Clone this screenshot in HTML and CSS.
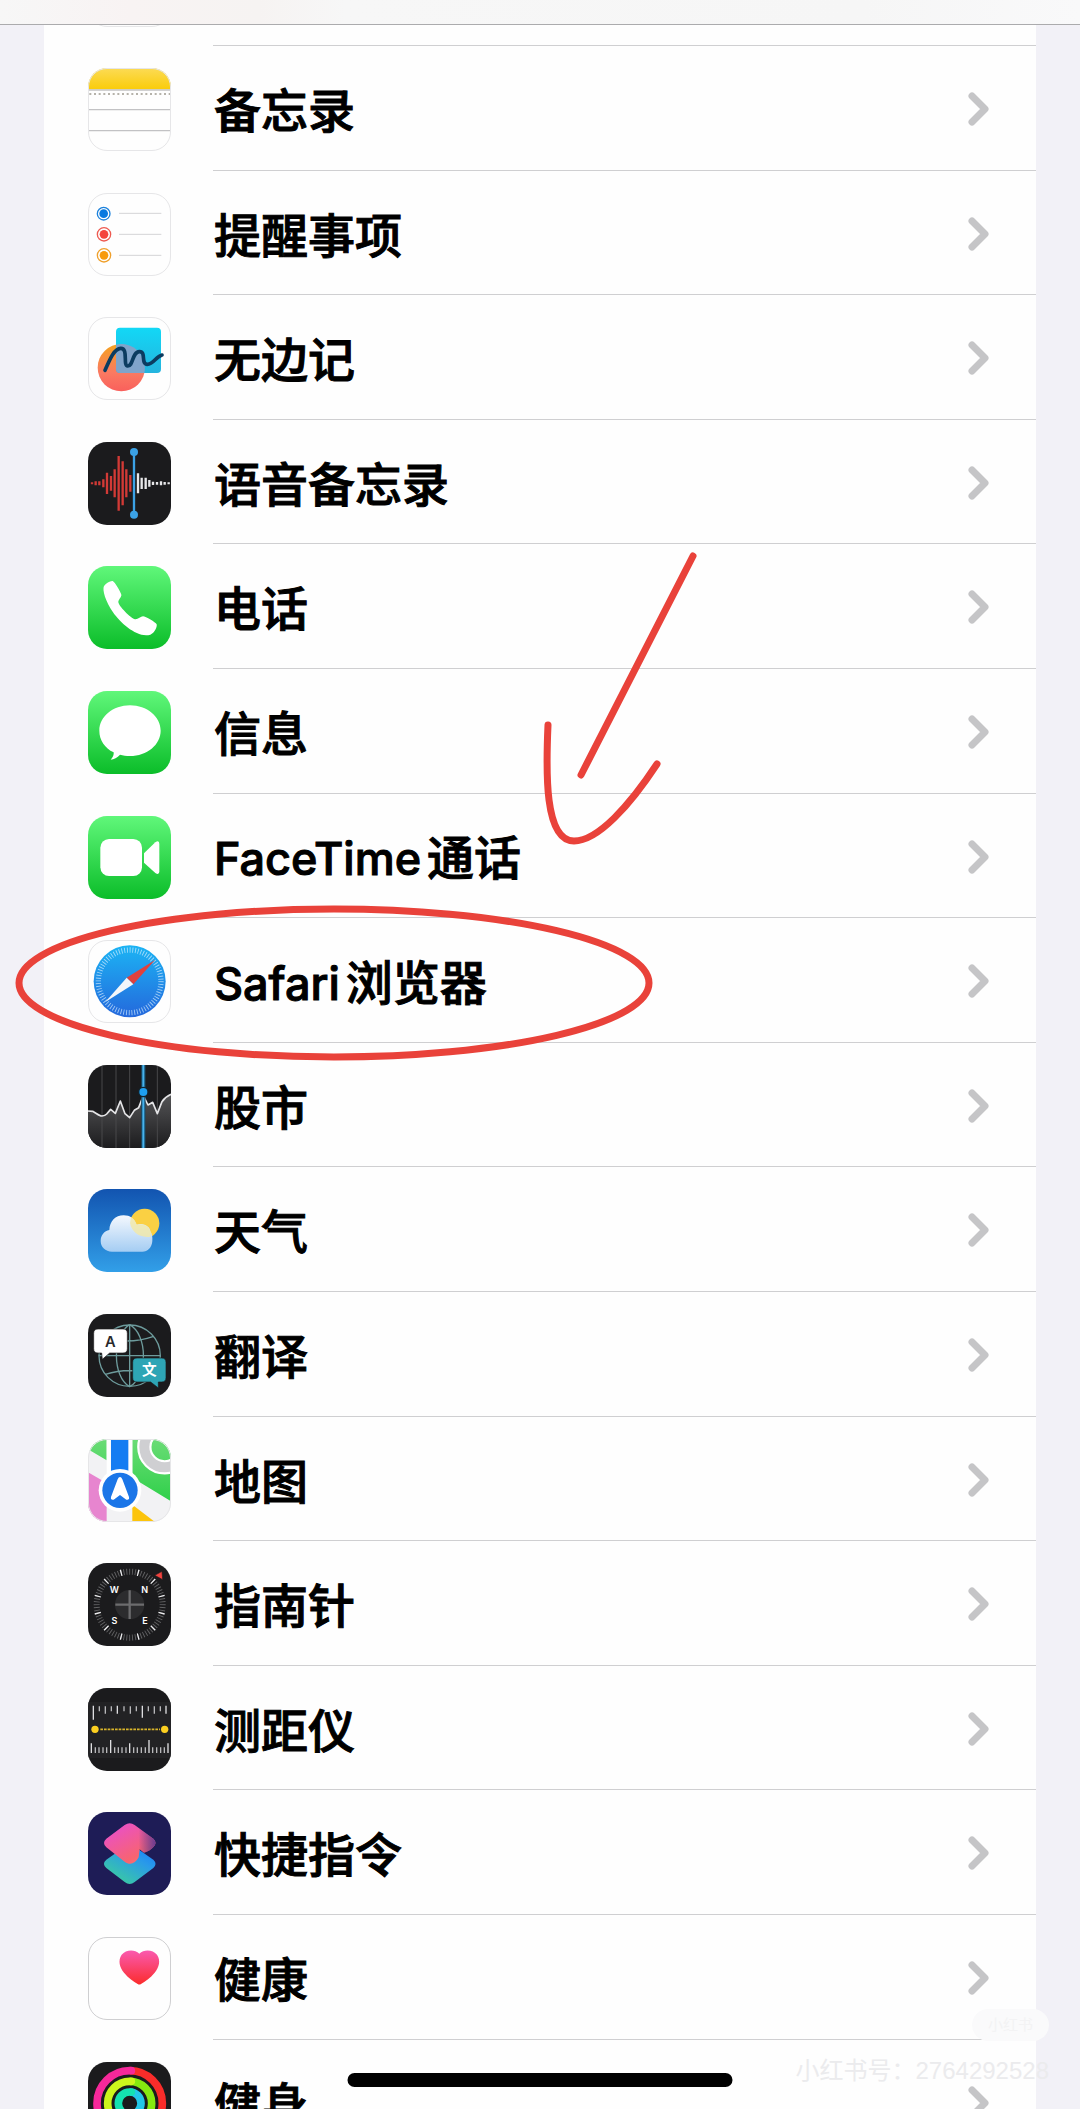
FILE: index.html
```html
<!DOCTYPE html>
<html lang="zh-CN">
<head>
<meta charset="utf-8">
<meta name="viewport" content="width=device-width, initial-scale=1">
<title>设置</title>
<link rel="stylesheet" href="styles.css">
</head>
<body>
<svg class="defs" aria-hidden="true">
  <defs>
    <symbol id="chevron" viewBox="0 0 22 36"><path d="M4 5 L17 18 L4 31" fill="none" stroke="#c5c5c7" stroke-width="7" stroke-linecap="round" stroke-linejoin="round"/></symbol>
    <linearGradient id="green" x2="0" y2="1"><stop offset="0" stop-color="#60f77a"/><stop offset="1" stop-color="#0bbd29"/></linearGradient>
    <linearGradient id="yellow" x2="0" y2="1"><stop offset="0" stop-color="#fcdb55"/><stop offset="1" stop-color="#facc0a"/></linearGradient>
    <linearGradient id="cyan" x2="0" y2="1"><stop offset="0" stop-color="#12d8f6"/><stop offset="1" stop-color="#25b4de"/></linearGradient>
    <linearGradient id="coral" x2="0" y2="1"><stop offset="0" stop-color="#f5a31f"/><stop offset="0.6" stop-color="#fa7a62"/><stop offset="1" stop-color="#f9605c"/></linearGradient>
    <linearGradient id="dial" x2="0" y2="1"><stop offset="0" stop-color="#1cb4f4"/><stop offset="1" stop-color="#2468dc"/></linearGradient>
    <linearGradient id="stock" x2="0" y2="1"><stop offset="0" stop-color="#555557"/><stop offset="1" stop-color="#1c1c1e"/></linearGradient>
    <linearGradient id="sky" x2="0" y2="1"><stop offset="0" stop-color="#1254b0"/><stop offset="1" stop-color="#329fe8"/></linearGradient>
    <linearGradient id="cloud" x2="0" y2="1"><stop offset="0" stop-color="#f4f8fe"/><stop offset="1" stop-color="#a5cdf3"/></linearGradient>
    <linearGradient id="park" x2="0" y2="1"><stop offset="0" stop-color="#6bdc76"/><stop offset="1" stop-color="#2fd04a"/></linearGradient>
    <linearGradient id="upper" x1="0.3" y2="1"><stop offset="0" stop-color="#ea50c8"/><stop offset="0.7" stop-color="#f76470"/><stop offset="1" stop-color="#f77d78"/></linearGradient>
    <linearGradient id="lower" x1="1" x2="0.2" y2="1"><stop offset="0" stop-color="#1578ff"/><stop offset="0.4" stop-color="#2a9be8"/><stop offset="1" stop-color="#3cd09a"/></linearGradient>
    <linearGradient id="shade" x1="0.45" x2="1"><stop offset="0" stop-color="#5a3a90" stop-opacity="0"/><stop offset="1" stop-color="#6b3b92"/></linearGradient>
    <linearGradient id="heart" x2="0" y2="1"><stop offset="0" stop-color="#fa5ab0"/><stop offset="1" stop-color="#fb2c2c"/></linearGradient>
  </defs>
</svg>
<div class="screen">
  <header class="topbar"></header>
  <main class="scroller">
    <ul class="list">
      <li class="row row-cut" aria-hidden="true">
        <svg class="icon icon-light" viewBox="0 0 249 249"></svg>
        <span class="cell"></span>
      </li>
      <li><a class="row" href="#notes">
        <svg class="icon icon-light" viewBox="0 0 249 249"><rect width="249" height="64" fill="url(#yellow)"/><path d="M0 66H249M0 125H249M0 188H249" stroke="#c2c2c4" stroke-width="4"/><path d="M4 78H249" stroke="#b5b2aa" stroke-width="6" stroke-dasharray="6 8"/></svg>
        <span class="cell"><span class="label">备忘录</span><svg class="chevron"><use href="#chevron"/></svg></span>
      </a></li>
      <li><a class="row" href="#reminders">
        <svg class="icon icon-light" viewBox="0 0 249 249"><path d="M93 61H220M93 124H220M93 187H220" stroke="#d4d4d6" stroke-width="3"/><g fill="none" stroke-width="4"><circle cx="47" cy="62" r="19" stroke="#1c82dc"/><circle cx="48" cy="124" r="20" stroke="#ee5a50"/><circle cx="48" cy="187" r="20" stroke="#efa02c"/></g><circle cx="47" cy="62" r="13" fill="#0879e0"/><circle cx="48" cy="124" r="13" fill="#f4443d"/><circle cx="48" cy="187" r="13" fill="#f79a0c"/></svg>
        <span class="cell"><span class="label">提醒事项</span><svg class="chevron"><use href="#chevron"/></svg></span>
      </a></li>
      <li><a class="row" href="#freeform">
        <svg class="icon icon-light" viewBox="0 0 249 249"><circle cx="100" cy="152" r="71" fill="url(#coral)"/><rect x="84" y="32" width="135" height="136" rx="12" fill="url(#cyan)"/><path d="M84 83A71 71 0 0 1 169 168H96Q84 168 84 156Z" fill="#80a4ca"/><path d="M51 160C65 128 78 95 98 94C122 93 104 146 119 147C136 148 132 105 154 104C176 103 157 142 178 142C197 142 203 119 222 114" fill="none" stroke="#0c3c60" stroke-width="11" stroke-linecap="round"/></svg>
        <span class="cell"><span class="label">无边记</span><svg class="chevron"><use href="#chevron"/></svg></span>
      </a></li>
      <li><a class="row" href="#voice-memos">
        <svg class="icon" viewBox="0 0 249 249"><rect width="249" height="249" fill="#1b1b1d"/><path d="M12 121v6M23 118v12M34 118v12M46 112v24M57 92v64M69 102v44M80 82v84M92 42v164M104 58v132M115 82v84M127 99v50" stroke="#d23a36" stroke-width="7"/><path d="M150 94v60M161 107v34M173 107v34M184 114v20M195 119v10M207 120v8M219 118v12M230 120v8M242 121v6" stroke="#e8e8ea" stroke-width="7"/><path d="M138 30V218" stroke="#3ba2e6" stroke-width="7"/><circle cx="138" cy="30" r="12" fill="#3ba2e6"/><circle cx="138" cy="218" r="12" fill="#3ba2e6"/></svg>
        <span class="cell"><span class="label">语音备忘录</span><svg class="chevron"><use href="#chevron"/></svg></span>
      </a></li>
      <li><a class="row" href="#phone">
        <svg class="icon" viewBox="0 0 249 249"><rect width="249" height="249" fill="url(#green)"/><path d="M48 60C55 51 66 44 74 45C80 47 99 79 100 86C101 93 91 100 91 108C91 119 129 158 141 160C150 161 158 151 165 151C173 151 203 169 206 175C208 183 200 201 187 206C151 218 98 173 75 139C53 107 42 72 48 60Z" fill="#fff"/></svg>
        <span class="cell"><span class="label">电话</span><svg class="chevron"><use href="#chevron"/></svg></span>
      </a></li>
      <li><a class="row" href="#messages">
        <svg class="icon" viewBox="0 0 249 249"><rect width="249" height="249" fill="url(#green)"/><path d="M126 43C177 43 218 77 218 119S177 195 126 195C115 195 105 193 96 191C88 200 78 205 68 206C75 199 78 191 77 184C50 171 34 147 34 119C34 77 75 43 126 43Z" fill="#fff"/></svg>
        <span class="cell"><span class="label">信息</span><svg class="chevron"><use href="#chevron"/></svg></span>
      </a></li>
      <li><a class="row" href="#facetime">
        <svg class="icon" viewBox="0 0 249 249"><rect width="249" height="249" fill="url(#green)"/><rect x="37" y="69" width="125" height="111" rx="26" fill="#fff"/><path d="M168 112L202 79Q214 71 214 84V166Q214 179 202 171L168 140Z" fill="#fff"/></svg>
        <span class="cell"><span class="label"><span class="latin">FaceTime</span>通话</span><svg class="chevron"><use href="#chevron"/></svg></span>
      </a></li>
      <li><a class="row" href="#safari">
        <svg class="icon icon-light" viewBox="0 0 249 249"><circle cx="125" cy="124" r="108" fill="url(#dial)"/><circle cx="125" cy="124" r="94" fill="none" stroke="#d8f0ff" stroke-opacity="0.7" stroke-width="16" pathLength="288" stroke-dasharray="1.3 2.7"/><path d="M201 60L136 133L116 113Z" fill="#e0413d"/><path d="M52 186L136 133L116 113Z" fill="#f4f7fa"/></svg>
        <span class="cell"><span class="label"><span class="latin">Safari</span>浏览器</span><svg class="chevron"><use href="#chevron"/></svg></span>
      </a></li>
      <li><a class="row" href="#stocks">
        <svg class="icon" viewBox="0 0 249 249"><rect width="249" height="249" fill="#1b1b1d"/><path d="M0 138L14 139L42 153L56 148L68 133L82 145L97 108L111 146L125 158L139 136L152 128L166 92L180 120L194 112L208 146L222 110L249 88V249H0Z" fill="url(#stock)"/><path d="M42 0V249M84 0V249M125 0V249M208 0V249" stroke="#48484a" stroke-width="3"/><path d="M0 138L14 139C28 147 36 154 42 153C50 152 52 151 56 147L68 133L82 145L97 108L111 146L125 158L139 136L152 128L166 92L180 120L194 112L208 146L222 110Q232 95 249 88" fill="none" stroke="#e4e4e6" stroke-width="5" stroke-linejoin="round"/><path d="M166 0V249" stroke="#164a66" stroke-width="13"/><path d="M166 0V249" stroke="#46b2ec" stroke-width="6"/><circle cx="166" cy="81" r="16" fill="#12242e"/><circle cx="166" cy="81" r="12" fill="#1e9ff0"/></svg>
        <span class="cell"><span class="label">股市</span><svg class="chevron"><use href="#chevron"/></svg></span>
      </a></li>
      <li><a class="row" href="#weather">
        <svg class="icon" viewBox="0 0 249 249"><rect width="249" height="249" fill="url(#sky)"/><circle cx="170" cy="103" r="44" fill="#fad043"/><path d="M72 188C52 188 38 174 38 156C38 138 49 126 64 123C65 97 82 79 107 79C126 79 139 89 146 107C168 99 187 114 187 127C192 134 194 144 193 156C192 175 179 188 163 188Z" fill="url(#cloud)"/><path d="M126 103C132 130 155 148 188 143L190 132L187 127C184 113 167 101 146 107C142 96 136 88 129 84Z" fill="#f3e9a5" opacity="0.8"/></svg>
        <span class="cell"><span class="label">天气</span><svg class="chevron"><use href="#chevron"/></svg></span>
      </a></li>
      <li><a class="row" href="#translate">
        <svg class="icon" viewBox="0 0 249 249"><rect width="249" height="249" fill="#1b1b1d"/><g fill="none" stroke="#6d9b9c" stroke-width="4"><circle cx="125" cy="125" r="92"/><path d="M125 32V218M32 125H217M125 32C180 62 180 188 125 218C72 188 72 62 125 32M52 72Q125 92 197 67M52 181Q125 158 197 181"/></g><path d="M30 45H105Q118 45 118 58V104Q118 117 105 117H65L43 136L41 117H30Q17 117 17 104V58Q17 45 30 45Z" fill="#fff" stroke="#1b1b1d" stroke-width="2"/><path d="M147 132H221Q234 132 234 145V191Q234 204 221 204H211V222L188 204H147Q134 204 134 191V145Q134 132 147 132Z" fill="#2ea5b5" stroke="#1b1b1d" stroke-width="2"/><text class="glyph glyph-dark" x="67" y="99">A</text><text class="glyph glyph-cjk" x="184" y="183">文</text></svg>
        <span class="cell"><span class="label">翻译</span><svg class="chevron"><use href="#chevron"/></svg></span>
      </a></li>
      <li><a class="row" href="#maps">
        <svg class="icon icon-light" viewBox="0 0 249 249"><rect width="249" height="249" fill="#f2f2f4"/><path d="M0 0H56V64L0 31ZM133 0H249V187L133 116Z" fill="url(#park)"/><circle cx="230" cy="24" r="61" fill="none" stroke="#fff" stroke-width="43"/><circle cx="230" cy="24" r="61" fill="none" stroke="#cfcfd2" stroke-width="30"/><path d="M0 100L56 132V249H0Z" fill="#e785cf"/><path d="M133 197L201 249H133Z" fill="#fcc40c"/><path d="M62 0V130M127 0V130" stroke="#fff" stroke-width="12"/><rect x="69" width="52" height="130" fill="#157cf2"/><circle cx="96" cy="154" r="64" fill="#fff"/><circle cx="96" cy="154" r="53" fill="#1b76e8"/><path d="M96 114Q100 114 103 121L123 174Q125 184 115 182L96 168L77 182Q67 184 69 174L89 121Q92 114 96 114Z" fill="#fff"/></svg>
        <span class="cell"><span class="label">地图</span><svg class="chevron"><use href="#chevron"/></svg></span>
      </a></li>
      <li><a class="row" href="#compass">
        <svg class="icon" viewBox="0 0 249 249"><rect width="249" height="249" fill="#1b1b1d"/><circle cx="125" cy="125" r="44" fill="#2c2c2e"/><circle cx="125" cy="125" r="99" fill="none" stroke="#626264" stroke-width="18" pathLength="360" stroke-dasharray="1.6 3.4" stroke-dashoffset="0.8"/><circle cx="125" cy="125" r="99" fill="none" stroke="#ececee" stroke-width="19" pathLength="360" stroke-dasharray="2.2 27.8" stroke-dashoffset="-13.9"/><path d="M125 82V168M82 125H168" stroke="#6c6c6e" stroke-width="7"/><path d="M200 37L222 25L224 50Z" fill="#f0423e" stroke="#1b1b1d" stroke-width="2"/><g class="glyph glyph-small"><text x="79" y="89">W</text><text x="170" y="89">N</text><text x="79" y="184">S</text><text x="171" y="184">E</text></g></svg>
        <span class="cell"><span class="label">指南针</span><svg class="chevron"><use href="#chevron"/></svg></span>
      </a></li>
      <li><a class="row" href="#measure">
        <svg class="icon" viewBox="0 0 249 249"><rect width="249" height="249" fill="#1b1b1d"/><rect y="42" width="249" height="168" fill="#222224"/><path d="M16 53V95M88 53V77M163 53V89M234 53V77" stroke="#dedee0" stroke-width="4"/><path d="M34 55V70M52 55V77M70 55V70M108 55V70M127 55V77M145 55V70M181 55V70M199 55V77M217 55V70" stroke="#b8b8ba" stroke-width="4"/><path d="M10 166V195M68 156V195M125 166V195M183 156V195M240 166V195" stroke="#dedee0" stroke-width="4"/><path d="M22 178V195M33 178V195M45 178V195M56 178V195M80 178V195M91 178V195M102 178V195M114 178V195M137 178V195M148 178V195M160 178V195M172 178V195M194 178V195M206 178V195M218 178V195M229 178V195" stroke="#b8b8ba" stroke-width="4"/><path d="M37 124H216" stroke="#d8b42a" stroke-width="5" stroke-dasharray="8 3"/><circle cx="21" cy="124" r="11" fill="#fccf20"/><circle cx="230" cy="124" r="11" fill="#fccf20"/></svg>
        <span class="cell"><span class="label">测距仪</span><svg class="chevron"><use href="#chevron"/></svg></span>
      </a></li>
      <li><a class="row" href="#shortcuts">
        <svg class="icon" viewBox="0 0 249 249"><rect width="249" height="249" fill="#1e1c56"/><path d="M112 103Q125 94 138 103L196 143Q209 155 196 168L140 210Q125 222 110 210L55 168Q41 155 55 143Z" fill="url(#lower)"/><path d="M110 39Q125 28 140 39L196 80Q209 93 196 105C190 113 179 119 168 122L155 112L152 136Q140 158 122 155Q114 153 107 147L55 106Q41 93 55 80Z" fill="url(#upper)"/><path d="M110 39Q125 28 140 39L196 80Q209 93 196 105C190 113 179 119 168 122L150 108L112 94Z" fill="url(#shade)"/></svg>
        <span class="cell"><span class="label">快捷指令</span><svg class="chevron"><use href="#chevron"/></svg></span>
      </a></li>
      <li><a class="row" href="#health">
        <svg class="icon icon-outlined" viewBox="0 0 249 249"><path d="M154 50C169 35 195 38 207 53C219 71 213 91 200 107C187 123 171 134 159 141Q154 144 149 141C137 134 121 123 108 107C95 91 89 71 101 53C113 38 139 35 154 50Z" fill="url(#heart)"/></svg>
        <span class="cell"><span class="label">健康</span><svg class="chevron"><use href="#chevron"/></svg></span>
      </a></li>
      <li><a class="row" href="#fitness">
        <svg class="icon" viewBox="0 0 249 249"><rect width="249" height="249" fill="#1b1b1d"/><g fill="none" stroke-width="23"><path d="M125 26A98 98 0 0 1 125 222" stroke="#f92c2a"/><path d="M125 222A98 98 0 0 1 125 26H130" stroke="#f6289a" stroke-linecap="round"/><path d="M125 58A66 66 0 0 1 125 190" stroke="#86ea10"/><path d="M125 190A66 66 0 0 1 125 58H130" stroke="#cdf51c" stroke-linecap="round"/><path d="M125 90A34 34 0 0 1 125 158" stroke="#22c8e8"/><path d="M125 158A34 34 0 0 1 125 90H130" stroke="#14e2b0" stroke-linecap="round"/></g></svg>
        <span class="cell"><span class="label">健身</span><svg class="chevron"><use href="#chevron"/></svg></span>
      </a></li>
    </ul>
    <svg class="marks" viewBox="0 0 1080 2109" aria-hidden="true">
      <g fill="none" stroke="#e9423a" stroke-width="7" stroke-linecap="round">
        <ellipse cx="334" cy="983" rx="315" ry="74"/>
        <path d="M693 556L581 775"/>
        <path d="M548 725C546 770 544 841 574 841C598 841 630 805 657 764"/>
      </g>
    </svg>
  </main>
  <div class="stamp"><span class="badge">小红书</span><span class="account">小红书号：2764292528</span></div>
  <div class="home-bar"></div>
</div>
</body>
</html>
```
FILE: styles.css
```css
* {
  box-sizing: border-box;
}

body {
  margin: 0;
  background: #f2f1f7;
  color: #000;
  font-family: Inter, "Noto Sans CJK SC", sans-serif;
}

.defs {
  position: absolute;
  width: 0;
  height: 0;
}

.screen {
  position: relative;
  display: flex;
  flex-direction: column;
  height: 100vh;
  overflow: hidden;
}

.topbar {
  flex: none;
  height: 25px;
  border-bottom: 1px solid #ababad;
  background: linear-gradient(90deg, #f7f7f7, #f8f3f3 12%, #f6f3f2 24%, #f7f7f7 32%, #f6f6f6 80%, #f9f9fa);
}

.scroller {
  flex: 1;
  min-height: 0;
  overflow-y: auto;
  scrollbar-width: none;
}

.list {
  margin: 0 44px;
  padding: 0;
  list-style: none;
  background: #fefefe;
}

.row {
  display: flex;
  align-items: center;
  gap: 42px;
  height: 125px;
  padding-left: 44px;
  color: inherit;
  text-decoration: none;
}

/* Two rows in five are a pixel shorter, so the pitch averages out. */
li:nth-child(5n + 3) .row,
li:nth-child(5n + 5) .row {
  height: 124px;
}

.row-cut {
  height: 21px;
  align-items: flex-end;
  overflow: hidden;
}

.row-cut .icon {
  margin-bottom: 19px;
}

.icon {
  flex: none;
  width: 83px;
  height: 83px;
  border-radius: 19px;
  overflow: hidden;
}

a.row .icon {
  margin-top: 2px;
}

.icon-light {
  outline: 1px solid #e6e6e8;
  outline-offset: -1px;
}

.icon-outlined {
  outline: 1px solid #cfcfd1;
  outline-offset: -1px;
}

.cell {
  flex: 1;
  display: flex;
  align-items: center;
  justify-content: space-between;
  align-self: stretch;
  padding: 2px 46px 0 1px;
  border-bottom: 1px solid #cfcfd1;
}

.label {
  padding-top: 4px;
  font-size: 47px;
  font-weight: 500;
  line-height: 64px;
  -webkit-text-stroke: 1px #000;
}

.latin {
  margin-right: 6px;
  font-size: 45px;
}

.chevron {
  width: 22px;
  height: 36px;
}

.glyph {
  fill: #fff;
  font-family: Inter, sans-serif;
  font-size: 44px;
  font-weight: 600;
  text-anchor: middle;
}

.glyph-dark {
  fill: #2a2a2c;
}

.glyph-cjk {
  font-family: "Noto Sans CJK SC", sans-serif;
  font-weight: 700;
}

.glyph-small {
  font-size: 27px;
}

.marks {
  position: absolute;
  top: 0;
  left: 0;
  width: 1080px;
  height: 2109px;
  pointer-events: none;
}

.stamp {
  position: absolute;
  right: 31px;
  bottom: 20px;
  display: flex;
  flex-direction: column;
  align-items: flex-end;
  gap: 12px;
  color: #ebebed;
  font-family: "Liberation Sans", "Noto Sans CJK SC", sans-serif;
  font-size: 24px;
  line-height: 36px;
}

.badge {
  padding: 0 16px;
  border-radius: 16px;
  background: #fafafb;
  color: #f3f3f4;
  font-size: 15px;
  line-height: 32px;
}

.home-bar {
  position: absolute;
  bottom: 22px;
  left: 50%;
  width: 385px;
  height: 14px;
  border-radius: 7px;
  background: #000;
  transform: translateX(-50%);
}
```
